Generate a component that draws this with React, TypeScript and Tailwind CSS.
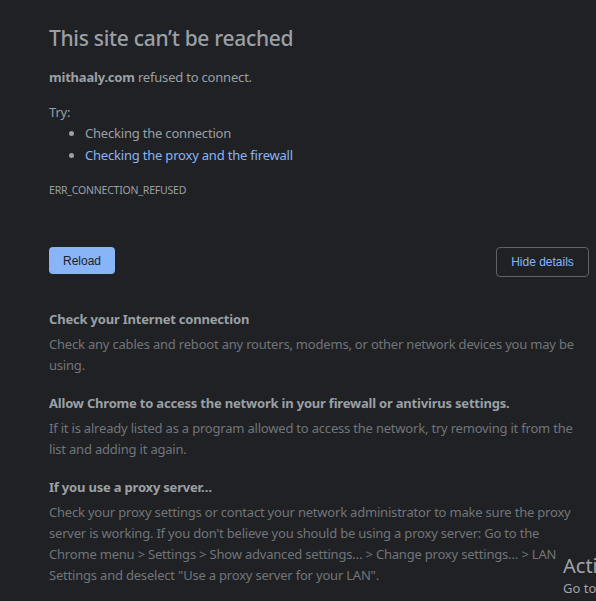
import React from 'react';

const sans = "font-['Segoe_UI','Noto_Sans',sans-serif]";

export default function App() {
  return (
    <div className={`relative min-h-[601px] w-full overflow-hidden bg-[#202124] ${sans} text-[#9aa0a6]`}>
      <div className="w-[540px] pl-[49px] pt-[24px] box-content">
        <h1 className="text-[21px] leading-[28px] tracking-[-0.3px] font-medium text-[#9aa0a6]">This site can’t be reached</h1>
        <p className="mt-[15px] text-[13px] leading-[20px] tracking-[-0.2px]">
          <span className="font-bold">mithaaly.com</span> refused to connect.
        </p>
        <p className="mt-[15px] text-[13px] leading-[20px] tracking-[-0.2px]">Try:</p>
        <ul className="pl-[36px] text-[13px] leading-[22px] tracking-[-0.2px] list-disc marker:text-[#9aa0a6]">
          <li>Checking the connection</li>
          <li className="text-[#8ab4f8]">Checking the proxy and the firewall</li>
        </ul>
        <div className="mt-[17px] text-[10.5px] leading-[14px] tracking-[-0.2px] uppercase">ERR_CONNECTION_REFUSED</div>

        <div className="mt-[50px] flex items-start justify-between">
          <button className="h-[27px] px-[14px] rounded-[4px] bg-[#8ab4f8] text-[#202124] text-[12px] font-['Liberation_Sans',Arial,sans-serif]">
            Reload
          </button>
          <button className="h-[30px] w-[93px] rounded-[4px] border border-[#5f6368] text-[#8ab4f8] text-[12px] font-['Liberation_Sans',Arial,sans-serif]">
            Hide details
          </button>
        </div>

        <div className="mt-[32px] text-[13px] leading-[21px] tracking-[-0.2px]">
          <h2 className="font-bold text-[#9aa0a6]">Check your Internet connection</h2>
          <p className="mt-[4px] text-[#70757a]">
            Check any cables and reboot any routers, modems, or other network devices you may be using.
          </p>
          <h2 className="mt-[17px] font-bold text-[#9aa0a6]">Allow Chrome to access the network in your firewall or antivirus settings.</h2>
          <p className="mt-[4px] text-[#70757a]">
            If it is already listed as a program allowed to access the network, try removing it from the list and adding it again.
          </p>
          <h2 className="mt-[17px] font-bold text-[#9aa0a6]">If you use a proxy server…</h2>
          <p className="mt-[4px] text-[#70757a]">
            Check your proxy settings or contact your network administrator to make sure the proxy server is working. If you don't believe you should be using a proxy server: Go to the Chrome menu &gt; Settings &gt; Show advanced settings… &gt; Change proxy settings… &gt; LAN Settings and deselect "Use a proxy server for your LAN".
          </p>
        </div>
      </div>

      <div className="absolute left-[563px] top-[553px] whitespace-nowrap text-[#a0a3a8]">
        <div className="text-[20px] leading-[26px]">Activate Windows</div>
        <div className="text-[13px] leading-[18px]">Go to Settings to activate Windows.</div>
      </div>
    </div>
  );
}
